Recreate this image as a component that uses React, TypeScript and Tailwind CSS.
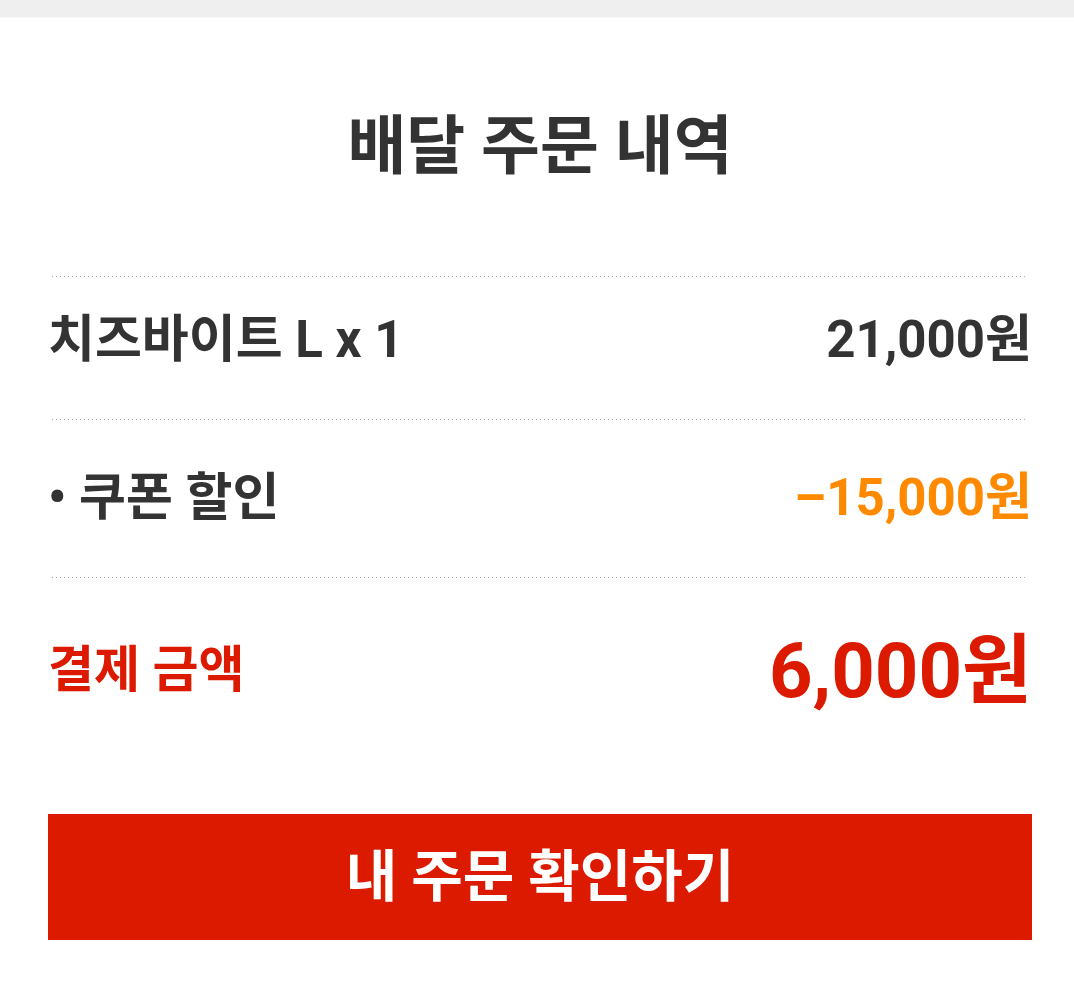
import React from "react";

const FONT = "font-['Roboto','Noto_Sans_CJK_KR',sans-serif]";

function Dots() {
  return (
    <div className="mx-1 h-px bg-[linear-gradient(to_right,#aaaaaa_1px,transparent_1px)] bg-[length:4px_1px]" />
  );
}

export default function App() {
  return (
    <div className={`h-[989px] overflow-hidden bg-white ${FONT}`}>
      <div className="h-[18px] border-b border-[#f6f6f6] bg-[#efefef]" />
      <div className="pl-12 pr-[42px]">
        <h1 className="flex h-[258px] items-center justify-center text-[64px] font-bold text-[#333]">
          배달 주문 내역
        </h1>
        <Dots />
        <div className="flex h-[142px] items-center justify-between pb-[16px] text-[51px] font-bold text-[#333]">
          <span>치즈바이트 L x 1</span>
          <span>21,000원</span>
        </div>
        <Dots />
        <div className="flex h-[157px] items-center justify-between text-[51px] font-bold">
          <span className="text-[#333]">• 쿠폰 할인</span>
          <span className="text-[#ff8a00]">–15,000원</span>
        </div>
        <Dots />
        <div className="flex h-[185px] items-center justify-between font-bold text-[#dc1a00]">
          <span className="text-[50px]">결제 금액</span>
          <span className="text-[76px]">6,000원</span>
        </div>
        <button className="mt-[51px] flex h-[126px] w-full items-center justify-center bg-[#dc1a00] text-[56px] font-bold text-white">
          내 주문 확인하기
        </button>
      </div>
    </div>
  );
}
